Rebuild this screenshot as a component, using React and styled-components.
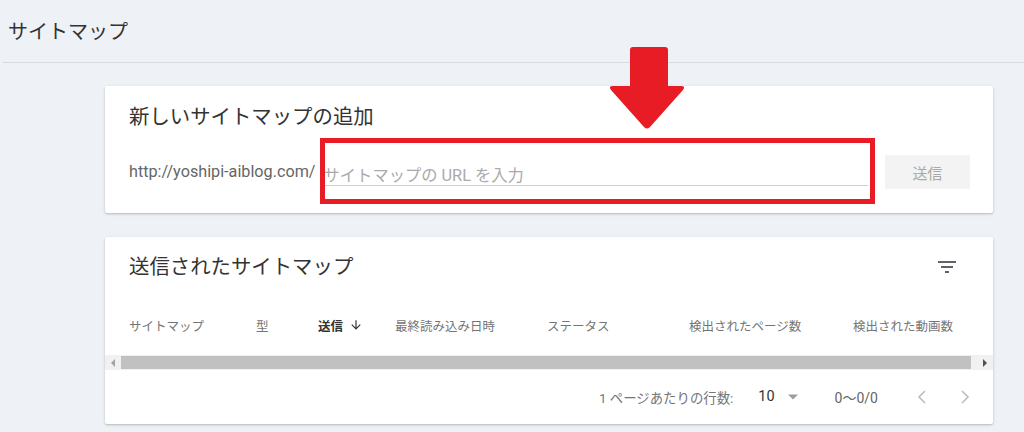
import React from "react";
import styled, { createGlobalStyle } from "styled-components";

const GlobalStyle = createGlobalStyle`
  html, body {
    margin: 0;
    padding: 0;
    background: #eef1f6;
    font-family: Roboto, "Noto Sans CJK JP", sans-serif;
  }
  #root {
    width: 1024px;
    height: 432px;
    overflow: hidden;
    position: relative;
  }
`;

const columns = [
  { label: "サイトマップ", width: 127 },
  { label: "型", width: 62 },
  { label: "送信", width: 77, sorted: true },
  { label: "最終読み込み日時", width: 152 },
  { label: "ステータス", width: 142 },
  { label: "検出されたページ数", width: 164 },
  { label: "検出された動画数", width: 110 },
];

export default function App() {
  return (
    <Page>
      <GlobalStyle />
      <Header>
        <PageTitle>サイトマップ</PageTitle>
      </Header>
      <Main>
        <Card>
          <CardTitle>新しいサイトマップの追加</CardTitle>
          <AddRow>
            <Prefix>http://yoshipi-aiblog.com/</Prefix>
            <UrlInput placeholder="サイトマップの URL を入力" />
            <SubmitButton disabled>送信</SubmitButton>
          </AddRow>
          <Highlight />
        </Card>
        <Card>
          <TitleRow>
            <CardTitle>送信されたサイトマップ</CardTitle>
            <FilterIcon width="24" height="24" viewBox="0 0 24 24">
              <path d="M3 6h18v2H3zM6 11h12v2H6zM10 16h4v2h-4z" fill="#5f6368" />
            </FilterIcon>
          </TitleRow>
          <HeadRow>
            {columns.map((c) => (
              <HeadCell key={c.label} $w={c.width} $active={c.sorted}>
                {c.label}
                {c.sorted && (
                  <svg width="14" height="14" viewBox="0 0 24 24">
                    <path d="M20 12l-1.41-1.41L13 16.17V4h-2v12.17l-5.58-5.59L4 12l8 8 8-8z" fill="#333" />
                  </svg>
                )}
              </HeadCell>
            ))}
          </HeadRow>
          <ScrollBar>
            <ScrollBtn>
              <svg width="6" height="8" viewBox="0 0 6 8"><path d="M5 0v8L1 4z" fill="#a3a3a3" /></svg>
            </ScrollBtn>
            <Thumb />
            <ScrollBtn>
              <svg width="6" height="8" viewBox="0 0 6 8"><path d="M1 0v8l4-4z" fill="#505050" /></svg>
            </ScrollBtn>
          </ScrollBar>
          <Footer>
            <FootLabel>1 ページあたりの行数:</FootLabel>
            <RowsSelect>
              10
              <svg width="10" height="6" viewBox="0 0 10 5"><path d="M0 0h10L5 5z" fill="#9e9e9e" /></svg>
            </RowsSelect>
            <FootRange>0〜0/0</FootRange>
            <PageNav>
              <svg width="10" height="14" viewBox="0 0 10 14"><path d="M8 1L2 7l6 6" stroke="#bdbdbd" strokeWidth="1.6" fill="none" /></svg>
              <svg width="10" height="14" viewBox="0 0 10 14"><path d="M2 1l6 6-6 6" stroke="#bdbdbd" strokeWidth="1.6" fill="none" /></svg>
            </PageNav>
          </Footer>
        </Card>
      </Main>
      <Arrow width="79" height="85" viewBox="0 0 79 85">
        <path
          d="M22 4 Q22 1 25 1 H57 Q60 1 60 4 V40 H73 Q78 40 75 44 L42 81 Q39 84 36 81 L3 44 Q0 40 5 40 H22 Z"
          fill="#e81c24"
        />
      </Arrow>
    </Page>
  );
}

const Page = styled.div`
  width: 1024px;
  height: 432px;
  position: relative;
`;

const Header = styled.header`
  height: 62px;
  display: flex;
  align-items: center;
  padding-left: 8px;
  margin-left: 3px;
  border-bottom: 1px solid #d8dbe0;
`;

const PageTitle = styled.h1`
  margin: 0 0 0 -3px;
  font-size: 20px;
  font-weight: 400;
  color: #333;
  padding-bottom: 2px;
`;

const Main = styled.main`
  padding: 23px 31px 0 105px;
  display: flex;
  flex-direction: column;
  gap: 24px;
`;

const Card = styled.section`
  position: relative;
  background: #fff;
  border-radius: 2px;
  box-shadow: 0 1px 2px rgba(0, 0, 0, 0.18), 0 1px 4px rgba(0, 0, 0, 0.08);
  &:first-child {
    height: 127px;
    padding: 18px 0 0 24px;
    box-sizing: border-box;
  }
  &:last-child {
    height: 187px;
  }
`;

const CardTitle = styled.h2`
  margin: 0;
  font-size: 20.4px;
  line-height: 26px;
  font-weight: 400;
  color: #333;
`;

const AddRow = styled.div`
  display: flex;
  align-items: center;
  margin-top: 25px;
  padding-right: 23px;
`;

const Prefix = styled.span`
  font-size: 16.2px;
  color: #666;
  padding-bottom: 2px;
`;

const UrlInput = styled.input`
  flex: 1;
  margin-left: 6px;
  margin-top: 7px;
  border: none;
  border-bottom: 1px solid #d0d0d0;
  padding: 0 0 0 2px;
  font-family: Roboto, "Noto Sans CJK JP", sans-serif;
  font-size: 16.3px;
  outline: none;
  background: transparent;
  &::placeholder {
    color: #aaa;
  }
`;

const SubmitButton = styled.button`
  margin-left: 17px;
  width: 85px;
  height: 34px;
  border: none;
  border-radius: 2px;
  background: #f3f3f3;
  color: #a9a9a9;
  font-family: Roboto, "Noto Sans CJK JP", sans-serif;
  font-size: 15px;
`;

const Highlight = styled.div`
  position: absolute;
  left: 215px;
  top: 52px;
  width: 555px;
  height: 66px;
  box-sizing: border-box;
  border: 5px solid #e81c24;
  pointer-events: none;
`;

const TitleRow = styled.div`
  display: flex;
  align-items: center;
  justify-content: space-between;
  padding: 17px 34px 0 24px;
`;

const FilterIcon = styled.svg`
  display: block;
`;

const HeadRow = styled.div`
  display: flex;
  align-items: center;
  height: 30px;
  margin-top: 30px;
  padding-left: 24px;
`;

const HeadCell = styled.div`
  width: ${(p) => p.$w}px;
  flex-shrink: 0;
  display: flex;
  align-items: center;
  gap: 6px;
  font-size: 12.5px;
  color: ${(p) => (p.$active ? "#333" : "#757575")};
  font-weight: ${(p) => (p.$active ? 700 : 400)};
  white-space: nowrap;
`;

const ScrollBar = styled.div`
  display: flex;
  align-items: stretch;
  height: 15px;
  margin-top: 15px;
  background: #f1f1f1;
`;

const ScrollBtn = styled.div`
  width: 16px;
  display: flex;
  align-items: center;
  justify-content: center;
`;

const Thumb = styled.div`
  flex: 1;
  margin: 1px 6px 1px 0;
  background: #c1c1c1;
`;

const Footer = styled.div`
  display: flex;
  align-items: center;
  justify-content: flex-end;
  height: 53px;
  padding-right: 23px;
  color: #757575;
`;

const FootLabel = styled.span`
  font-size: 13.4px;
`;

const RowsSelect = styled.span`
  display: flex;
  align-items: center;
  gap: 13px;
  margin-left: 25px;
  font-size: 14.5px;
  color: #333;
`;

const FootRange = styled.span`
  margin-left: 37px;
  font-size: 14px;
  color: #666;
`;

const PageNav = styled.span`
  display: flex;
  gap: 33px;
  margin-left: 39px;
`;

const Arrow = styled.svg`
  position: absolute;
  left: 608px;
  top: 46px;
`;
